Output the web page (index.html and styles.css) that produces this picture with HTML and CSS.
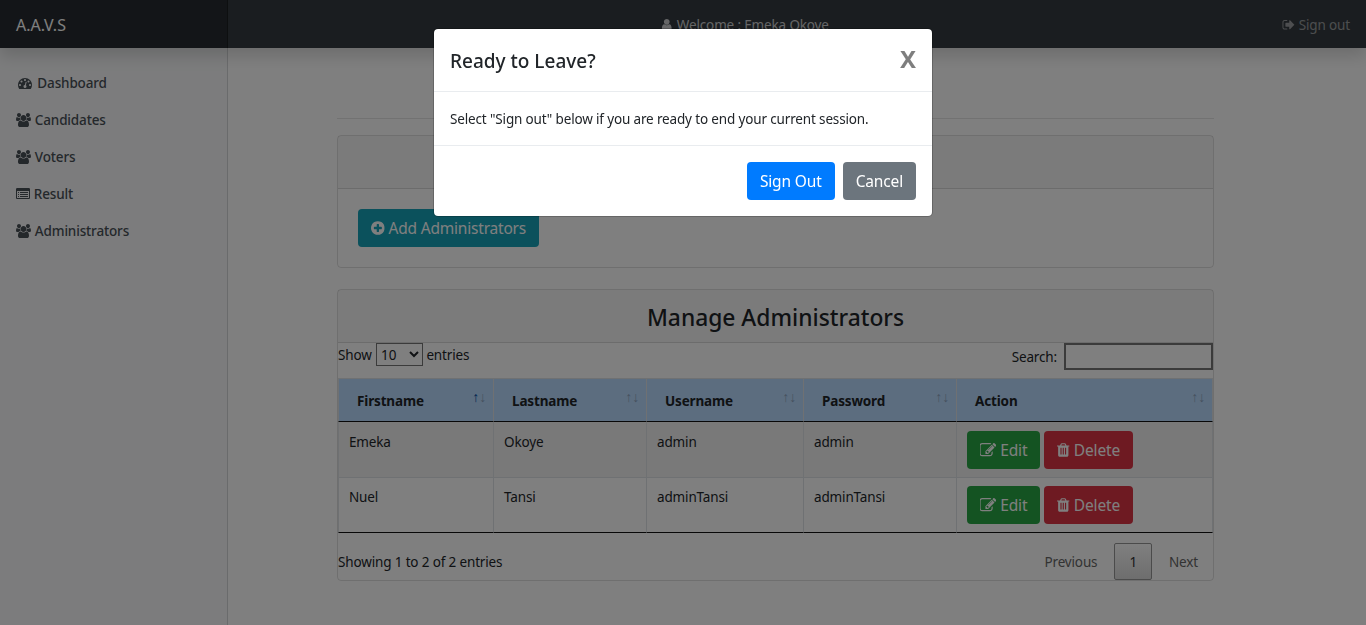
FILE: index.html
```html
<!DOCTYPE html>
<html lang="en">
<head>
    <meta charset="UTF-8">
    <meta name="viewport" content="width=device-width, initial-scale=1.0">
    <title>A.A.V.S - Administrators</title>
    <link rel="stylesheet" href="styles.css">
</head>
<body>
    <svg class="icon-defs" xmlns="http://www.w3.org/2000/svg">
        <symbol id="i-dashboard" viewBox="0 0 1792 1792"><path d="M384 1152q0-53-37.5-90.5t-90.5-37.5-90.5 37.5-37.5 90.5 37.5 90.5 90.5 37.5 90.5-37.5 37.5-90.5zm192-448q0-53-37.5-90.5t-90.5-37.5-90.5 37.5-37.5 90.5 37.5 90.5 90.5 37.5 90.5-37.5 37.5-90.5zm428 481l101-382q6-26-7.5-48.5t-38.5-29.5-48 6.5-30 39.5l-101 382q-60 5-107 43.5t-63 98.5q-20 77 20 146t117 89 146-20 89-117q16-60-6-117t-72-91zm660-33q0-53-37.5-90.5t-90.5-37.5-90.5 37.5-37.5 90.5 37.5 90.5 90.5 37.5 90.5-37.5 37.5-90.5zm-640-640q0-53-37.5-90.5t-90.5-37.5-90.5 37.5-37.5 90.5 37.5 90.5 90.5 37.5 90.5-37.5 37.5-90.5zm448 192q0-53-37.5-90.5t-90.5-37.5-90.5 37.5-37.5 90.5 37.5 90.5 90.5 37.5 90.5-37.5 37.5-90.5zm320 448q0 261-141 483-19 29-54 29h-1402q-35 0-54-29-141-221-141-483 0-182 71-348t191-286 286-191 348-71 348 71 286 191 191 286 71 348z"/></symbol>
        <symbol id="i-users" viewBox="0 0 1920 1792"><path d="M593 896q-162 5-265 128h-134q-82 0-138-40.5t-56-118.5q0-353 124-353 6 0 43.5 21t97.5 42.5 119 21.5q67 0 133-23-5 37-5 66 0 139 81 256zm1071 637q0 120-73 189.5t-194 69.5h-874q-121 0-194-69.5t-73-189.5q0-53 3.5-103.5t14-109 26.5-108.5 43-97.5 62-81 85.5-53.5 111.5-20q10 0 43 21.5t73 48 107 48 135 21.5 135-21.5 107-48 73-48 43-21.5q61 0 111.5 20t85.5 53.5 62 81 43 97.5 26.5 108.5 14 109 3.5 103.5zm-1024-1277q0 106-75 181t-181 75-181-75-75-181 75-181 181-75 181 75 75 181zm704 384q0 159-112.5 271.5t-271.5 112.5-271.5-112.5-112.5-271.5 112.5-271.5 271.5-112.5 271.5 112.5 112.5 271.5zm576 225q0 78-56 118.5t-138 40.5h-134q-103-123-265-128 81-117 81-256 0-29-5-66 66 23 133 23 59 0 119-21.5t97.5-42.5 43.5-21q124 0 124 353zm-128-609q0 106-75 181t-181 75-181-75-75-181 75-181 181-75 181 75 75 181z"/></symbol>
        <symbol id="i-list" viewBox="0 0 1792 1792"><path d="M384 1184v64q0 13-9.5 22.5t-22.5 9.5h-64q-13 0-22.5-9.5t-9.5-22.5v-64q0-13 9.5-22.5t22.5-9.5h64q13 0 22.5 9.5t9.5 22.5zm0-256v64q0 13-9.5 22.5t-22.5 9.5h-64q-13 0-22.5-9.5t-9.5-22.5v-64q0-13 9.5-22.5t22.5-9.5h64q13 0 22.5 9.5t9.5 22.5zm0-256v64q0 13-9.5 22.5t-22.5 9.5h-64q-13 0-22.5-9.5t-9.5-22.5v-64q0-13 9.5-22.5t22.5-9.5h64q13 0 22.5 9.5t9.5 22.5zm1152 512v64q0 13-9.5 22.5t-22.5 9.5h-960q-13 0-22.5-9.5t-9.5-22.5v-64q0-13 9.5-22.5t22.5-9.5h960q13 0 22.5 9.5t9.5 22.5zm0-256v64q0 13-9.5 22.5t-22.5 9.5h-960q-13 0-22.5-9.5t-9.5-22.5v-64q0-13 9.5-22.5t22.5-9.5h960q13 0 22.5 9.5t9.5 22.5zm0-256v64q0 13-9.5 22.5t-22.5 9.5h-960q-13 0-22.5-9.5t-9.5-22.5v-64q0-13 9.5-22.5t22.5-9.5h960q13 0 22.5 9.5t9.5 22.5zm128 704v-832q0-13-9.5-22.5t-22.5-9.5h-1472q-13 0-22.5 9.5t-9.5 22.5v832q0 13 9.5 22.5t22.5 9.5h1472q13 0 22.5-9.5t9.5-22.5zm128-1088v1088q0 66-47 113t-113 47h-1472q-66 0-113-47t-47-113v-1088q0-66 47-113t113-47h1472q66 0 113 47t47 113z"/></symbol>
        <symbol id="i-plus" viewBox="128 0 1536 1792"><path d="M1344 960v-128q0-26-19-45t-45-19h-256v-256q0-26-19-45t-45-19h-128q-26 0-45 19t-19 45v256h-256q-26 0-45 19t-19 45v128q0 26 19 45t45 19h256v256q0 26 19 45t45 19h128q26 0 45-19t19-45v-256h256q26 0 45-19t19-45zm320-64q0 209-103 385.5t-279.5 279.5-385.5 103-385.5-103-279.5-279.5-103-385.5 103-385.5 279.5-279.5 385.5-103 385.5 103 279.5 279.5 103 385.5z"/></symbol>
        <symbol id="i-edit" viewBox="64 128 1728 1536"><path d="M888 1184l116-116-152-152-116 116v56h96v96h56zm440-720q-16-16-33 1l-350 350q-17 17-1 33t33-1l350-350q17-17 1-33zm80 594v190q0 119-84.5 203.5t-203.5 84.5h-832q-119 0-203.5-84.5t-84.5-203.5v-832q0-119 84.5-203.5t203.5-84.5h832q63 0 117 25 15 7 18 23 3 17-9 29l-49 49q-14 14-32 8-23-6-45-6h-832q-66 0-113 47t-47 113v832q0 66 47 113t113 47h832q66 0 113-47t47-113v-126q0-13 9-22l64-64q15-15 35-7t20 29zm-96-738l288 288-672 672h-288v-288zm444 132l-92 92-288-288 92-92q28-28 68-28t68 28l152 152q28 28 28 68t-28 68z"/></symbol>
        <symbol id="i-trash" viewBox="192 0 1408 1792"><path d="M704 1376v-704q0-14-9-23t-23-9h-64q-14 0-23 9t-9 23v704q0 14 9 23t23 9h64q14 0 23-9t9-23zm256 0v-704q0-14-9-23t-23-9h-64q-14 0-23 9t-9 23v704q0 14 9 23t23 9h64q14 0 23-9t9-23zm256 0v-704q0-14-9-23t-23-9h-64q-14 0-23 9t-9 23v704q0 14 9 23t23 9h64q14 0 23-9t9-23zm-544-992h448l-48-117q-7-9-17-11h-317q-10 2-17 11zm928 32v64q0 14-9 23t-23 9h-96v948q0 83-47 143.5t-113 60.5h-832q-66 0-113-58.5t-47-141.5v-952h-96q-14 0-23-9t-9-23v-64q0-14 9-23t23-9h309l70-167q15-37 54-63t79-26h320q40 0 79 26t54 63l70 167h309q14 0 23 9t9 23z"/></symbol>
        <symbol id="i-signout" viewBox="0 0 1792 1792"><path d="M704 1440q0 4 1 20t.5 26.5-3 23.5-10 19.5-20.5 6.5h-320q-119 0-203.5-84.5t-84.5-203.5v-704q0-119 84.5-203.5t203.5-84.5h320q13 0 22.5 9.5t9.5 22.5q0 4 1 20t.5 26.5-3 23.5-10 19.5-20.5 6.5h-320q-66 0-113 47t-47 113v704q0 66 47 113t113 47h312l11.5 1 11.5 3 8 5.5 7 9 2 13.5zm928-544q0 26-19 45l-544 544q-19 19-45 19t-45-19-19-45v-288h-448q-26 0-45-19t-19-45v-384q0-26 19-45t45-19h448v-288q0-26 19-45t45-19 45 19l544 544q19 19 19 45z"/></symbol>
        <symbol id="i-user" viewBox="0 0 1792 1792"><path d="M1536 1399q0 109-62.5 187t-150.5 78h-854q-88 0-150.5-78t-62.5-187q0-85 8.5-160.5t31.5-152 58.5-131 94-89 134.5-34.5q131 128 313 128t313-128q76 0 134.5 34.5t94 89 58.5 131 31.5 152 8.5 160.5zm-256-887q0 159-112.5 271.5t-271.5 112.5-271.5-112.5-112.5-271.5 112.5-271.5 271.5-112.5 271.5 112.5 112.5 271.5z"/></symbol>
    </svg>

    <header class="navbar">
        <a class="brand" href="#">A.A.V.S</a>
        <span class="welcome"><svg class="icon"><use href="#i-user"/></svg> Welcome : Emeka Okoye</span>
        <a class="signout" href="#"><svg class="icon"><use href="#i-signout"/></svg> Sign out</a>
    </header>

    <div class="wrapper">
        <nav class="sidebar">
            <a class="nav-link nav-first" href="#"><svg class="icon"><use href="#i-dashboard"/></svg> Dashboard</a>
            <a class="nav-link" href="#"><svg class="icon icon-wide"><use href="#i-users"/></svg> Candidates</a>
            <a class="nav-link" href="#"><svg class="icon icon-wide"><use href="#i-users"/></svg> Voters</a>
            <a class="nav-link" href="#"><svg class="icon"><use href="#i-list"/></svg> Result</a>
            <a class="nav-link" href="#"><svg class="icon icon-wide"><use href="#i-users"/></svg> Administrators</a>
        </nav>

        <main class="content">
            <hr class="rule">

            <section class="card">
                <div class="card-header"></div>
                <div class="card-body">
                    <button class="btn btn-info" type="button"><svg class="icon icon-plus"><use href="#i-plus"/></svg> Add Administrators</button>
                </div>
            </section>

            <section class="card card-table">
                <div class="card-header title-header">
                    <h3>Manage Administrators</h3>
                </div>

                <div class="table-controls">
                    <label class="length">Show
                        <select>
                            <option>10</option>
                            <option>25</option>
                            <option>50</option>
                        </select>
                        entries</label>
                    <label class="search">Search: <input type="search"></label>
                </div>

                <table class="admin-table">
                    <colgroup>
                        <col class="col-first">
                        <col class="col-last">
                        <col class="col-user">
                        <col class="col-pass">
                        <col>
                    </colgroup>
                    <thead>
                        <tr>
                            <th><span class="th-label">Firstname</span><span class="sort"><b class="on">↑</b><b>↓</b></span></th>
                            <th><span class="th-label">Lastname</span><span class="sort"><b>↑</b><b>↓</b></span></th>
                            <th><span class="th-label">Username</span><span class="sort"><b>↑</b><b>↓</b></span></th>
                            <th><span class="th-label">Password</span><span class="sort"><b>↑</b><b>↓</b></span></th>
                            <th><span class="th-label">Action</span><span class="sort"><b>↑</b><b>↓</b></span></th>
                        </tr>
                    </thead>
                    <tbody>
                        <tr class="odd">
                            <td>Emeka</td>
                            <td>Okoye</td>
                            <td>admin</td>
                            <td>admin</td>
                            <td>
                                <div class="actions">
                                    <button class="btn btn-success" type="button"><svg class="icon icon-edit"><use href="#i-edit"/></svg> Edit</button>
                                    <button class="btn btn-danger" type="button"><svg class="icon icon-trash"><use href="#i-trash"/></svg> Delete</button>
                                </div>
                            </td>
                        </tr>
                        <tr>
                            <td>Nuel</td>
                            <td>Tansi</td>
                            <td>adminTansi</td>
                            <td>adminTansi</td>
                            <td>
                                <div class="actions">
                                    <button class="btn btn-success" type="button"><svg class="icon icon-edit"><use href="#i-edit"/></svg> Edit</button>
                                    <button class="btn btn-danger" type="button"><svg class="icon icon-trash"><use href="#i-trash"/></svg> Delete</button>
                                </div>
                            </td>
                        </tr>
                    </tbody>
                </table>

                <div class="table-footer">
                    <span class="info">Showing 1 to 2 of 2 entries</span>
                    <div class="pagination">
                        <a class="page" href="#">Previous</a>
                        <a class="page current" href="#">1</a>
                        <a class="page" href="#">Next</a>
                    </div>
                </div>
            </section>
        </main>
    </div>

    <div class="backdrop"></div>
    <div class="modal">
        <div class="modal-box">
            <div class="modal-header">
                <h5>Ready to Leave?</h5>
                <span class="close">X</span>
            </div>
            <div class="modal-body">Select "Sign out" below if you are ready to end your current session.</div>
            <div class="modal-footer">
                <button class="btn btn-primary" type="button">Sign Out</button>
                <button class="btn btn-secondary" type="button">Cancel</button>
            </div>
        </div>
    </div>
</body>
</html>
```

FILE: styles.css
```css
* {
    box-sizing: border-box;
}
html, body {
    height: 100%;
}
body {
    margin: 0;
    overflow: hidden;
    font-family: "Noto Sans", "Open Sans", sans-serif;
    font-size: 13.5px;
    letter-spacing: -0.15px;
    line-height: 21px;
    color: #212529;
    background-color: #fff;
}
a {
    color: inherit;
    text-decoration: none;
}
.icon-defs {
    display: none;
}
.icon {
    width: 1em;
    height: 1em;
    fill: currentColor;
    vertical-align: -0.125em;
}
.icon-wide {
    width: 1.07em;
}
.icon-plus {
    width: 0.857em;
}
.icon-edit {
    width: 1.02em;
    height: 0.91em;
    vertical-align: -0.08em;
}
.icon-trash {
    width: 0.786em;
}

/* top bar */
.navbar {
    display: flex;
    align-items: center;
    height: 48px;
    background-color: #343a40;
    box-shadow: 0 8px 16px rgba(0, 0, 0, 0.15);
    position: relative;
}
.brand {
    width: 228px;
    height: 48px;
    padding: 0 16px;
    font-size: 16px;
    letter-spacing: 0;
    line-height: 50px;
    color: #fff;
    background-color: rgba(0, 0, 0, 0.25);
    border-right: 1px solid rgba(0, 0, 0, 0.3);
}
.welcome {
    margin-left: 432px;
    padding-top: 2px;
    color: rgba(255, 255, 255, 0.75);
}
.signout {
    margin-left: auto;
    padding: 2px 16px 0 0;
    color: rgba(255, 255, 255, 0.5);
}

/* layout */
.wrapper {
    display: flex;
    height: calc(100% - 48px);
}
.sidebar {
    width: 228px;
    padding-top: 17px;
    background-color: #f8f9fa;
    border-right: 1px solid #d5d7d9;
}
.nav-link {
    display: block;
    padding: 8px 16px;
    color: #495057;
    font-weight: 500;
}
.nav-link .icon {
    font-size: 14px;
    margin-right: 0.5px;
}
.nav-first .icon {
    margin: 0 2px;
}
.content {
    flex: 1;
    padding: 70px 152px 0 109px;
}
.rule {
    margin: 0 0 16px;
    border: 0;
    border-top: 1px solid rgba(0, 0, 0, 0.1);
}

/* cards */
.card {
    border: 1px solid rgba(0, 0, 0, 0.125);
    border-radius: 4px;
    margin-bottom: 21px;
}
.card-header {
    height: 53px;
    background-color: rgba(0, 0, 0, 0.03);
    border-bottom: 1px solid rgba(0, 0, 0, 0.125);
}
.card-body {
    padding: 20px;
    height: 78px;
}
.title-header {
    text-align: center;
}
.title-header h3 {
    margin: 0;
    padding-top: 1px;
    font-size: 22.8px;
    font-weight: 500;
    letter-spacing: 0;
    line-height: 54px;
}

/* buttons */
.btn {
    display: inline-block;
    height: 38px;
    padding: 0 12px;
    font-family: inherit;
    font-size: 15.5px;
    letter-spacing: inherit;
    line-height: 36px;
    color: #fff;
    border: 1px solid transparent;
    border-radius: 4px;
    cursor: pointer;
    white-space: nowrap;
}
.btn .icon {
    font-size: 16px;
}
.btn-info {
    background-color: #17a2b8;
    letter-spacing: -0.2px;
}
.btn-success {
    background-color: #28a745;
}
.btn-danger {
    background-color: #dc3545;
}
.btn-primary {
    background-color: #007bff;
}
.btn-secondary {
    background-color: #6c757d;
}

/* datatable */
.table-controls {
    display: flex;
    justify-content: space-between;
    height: 35px;
}
.length {
    line-height: 24px;
}
.length select {
    width: 47px;
    height: 23px;
    margin-left: 1px;
    font-family: inherit;
    font-size: 13.5px;
    color: #212529;
    background-color: #fff;
    vertical-align: top;
}
.search {
    display: flex;
    line-height: 29px;
    gap: 7px;
}
.search input {
    width: 149px;
    height: 27px;
    padding: 0;
    border: 2px solid #767676;
    outline: 0;
}
.admin-table {
    width: 100%;
    table-layout: fixed;
    border-collapse: separate;
    border-spacing: 0;
    border-top: 1px solid #dee2e6;
}
.col-first {
    width: 156px;
}
.col-last {
    width: 153px;
}
.col-user {
    width: 157px;
}
.col-pass {
    width: 153px;
}
.admin-table th {
    position: relative;
    height: 43px;
    padding: 0 30px 0 18px;
    text-align: left;
    font-weight: 700;
    color: #212529;
    background-color: #b8daff;
    border-right: 1px solid #dee2e6;
    border-bottom: 1px solid #111;
}
.admin-table th:first-child, .admin-table td:first-child {
    border-left: 1px solid #dee2e6;
}
.th-label {
    display: block;
    padding-top: 3px;
}
.sort {
    position: absolute;
    top: 9px;
    right: 7px;
    display: flex;
    font-family: "Liberation Sans", sans-serif;
    font-size: 14px;
    line-height: 18px;
    opacity: 0.3;
}
.sort b {
    font-weight: 400;
}
.sort .on {
    color: #004a9f;
}
th:first-child .sort {
    opacity: 1;
}
th:first-child .sort b:last-child {
    opacity: 0.3;
}
.admin-table td {
    padding: 8px 10px;
    line-height: 23px;
    vertical-align: top;
    border-right: 1px solid #dee2e6;
    border-bottom: 1px solid #111;
}
.admin-table .odd td {
    padding-top: 9px;
    background-color: rgba(0, 0, 0, 0.05);
    border-bottom: 1px solid #dee2e6;
}
.actions {
    display: flex;
    gap: 4px;
}
.table-footer {
    display: flex;
    justify-content: space-between;
    height: 47px;
    padding-top: 10px;
}
.info {
    margin-top: 9px;
}
.pagination {
    display: flex;
    color: #666;
}
.page {
    height: 37px;
    margin-left: 2px;
    padding: 8px 14px 6px;
    border: 1px solid transparent;
    border-radius: 2px;
}
.current {
    color: #333;
    background: linear-gradient(to bottom, #fff 0%, #dcdcdc 100%);
    border-color: #979797;
}

/* modal */
.backdrop {
    position: fixed;
    top: 0;
    left: 0;
    width: 100%;
    height: 100%;
    background-color: #000;
    opacity: 0.5;
}
.modal {
    position: fixed;
    top: 0;
    left: 0;
    width: 100%;
    display: flex;
    justify-content: center;
    padding-top: 28px;
}
.modal-box {
    width: 500px;
    background-color: #fff;
    border: 1px solid rgba(0, 0, 0, 0.2);
    border-radius: 5px;
    background-clip: padding-box;
}
.modal-header {
    display: flex;
    justify-content: space-between;
    align-items: center;
    height: 63px;
    padding: 2px 16px 0;
    border-bottom: 1px solid #e9ecef;
}
.modal-header h5 {
    margin: 0;
    font-size: 19px;
    font-weight: 500;
    letter-spacing: 0;
    line-height: 30px;
}
.close {
    font-size: 24px;
    font-weight: 700;
    color: #000;
    opacity: 0.5;
    margin-top: -6px;
}
.modal-body {
    padding: 17px 16px 15px;
    border-bottom: 1px solid #e9ecef;
}
.modal-footer {
    display: flex;
    justify-content: flex-end;
    gap: 8px;
    padding: 16px;
}
```
